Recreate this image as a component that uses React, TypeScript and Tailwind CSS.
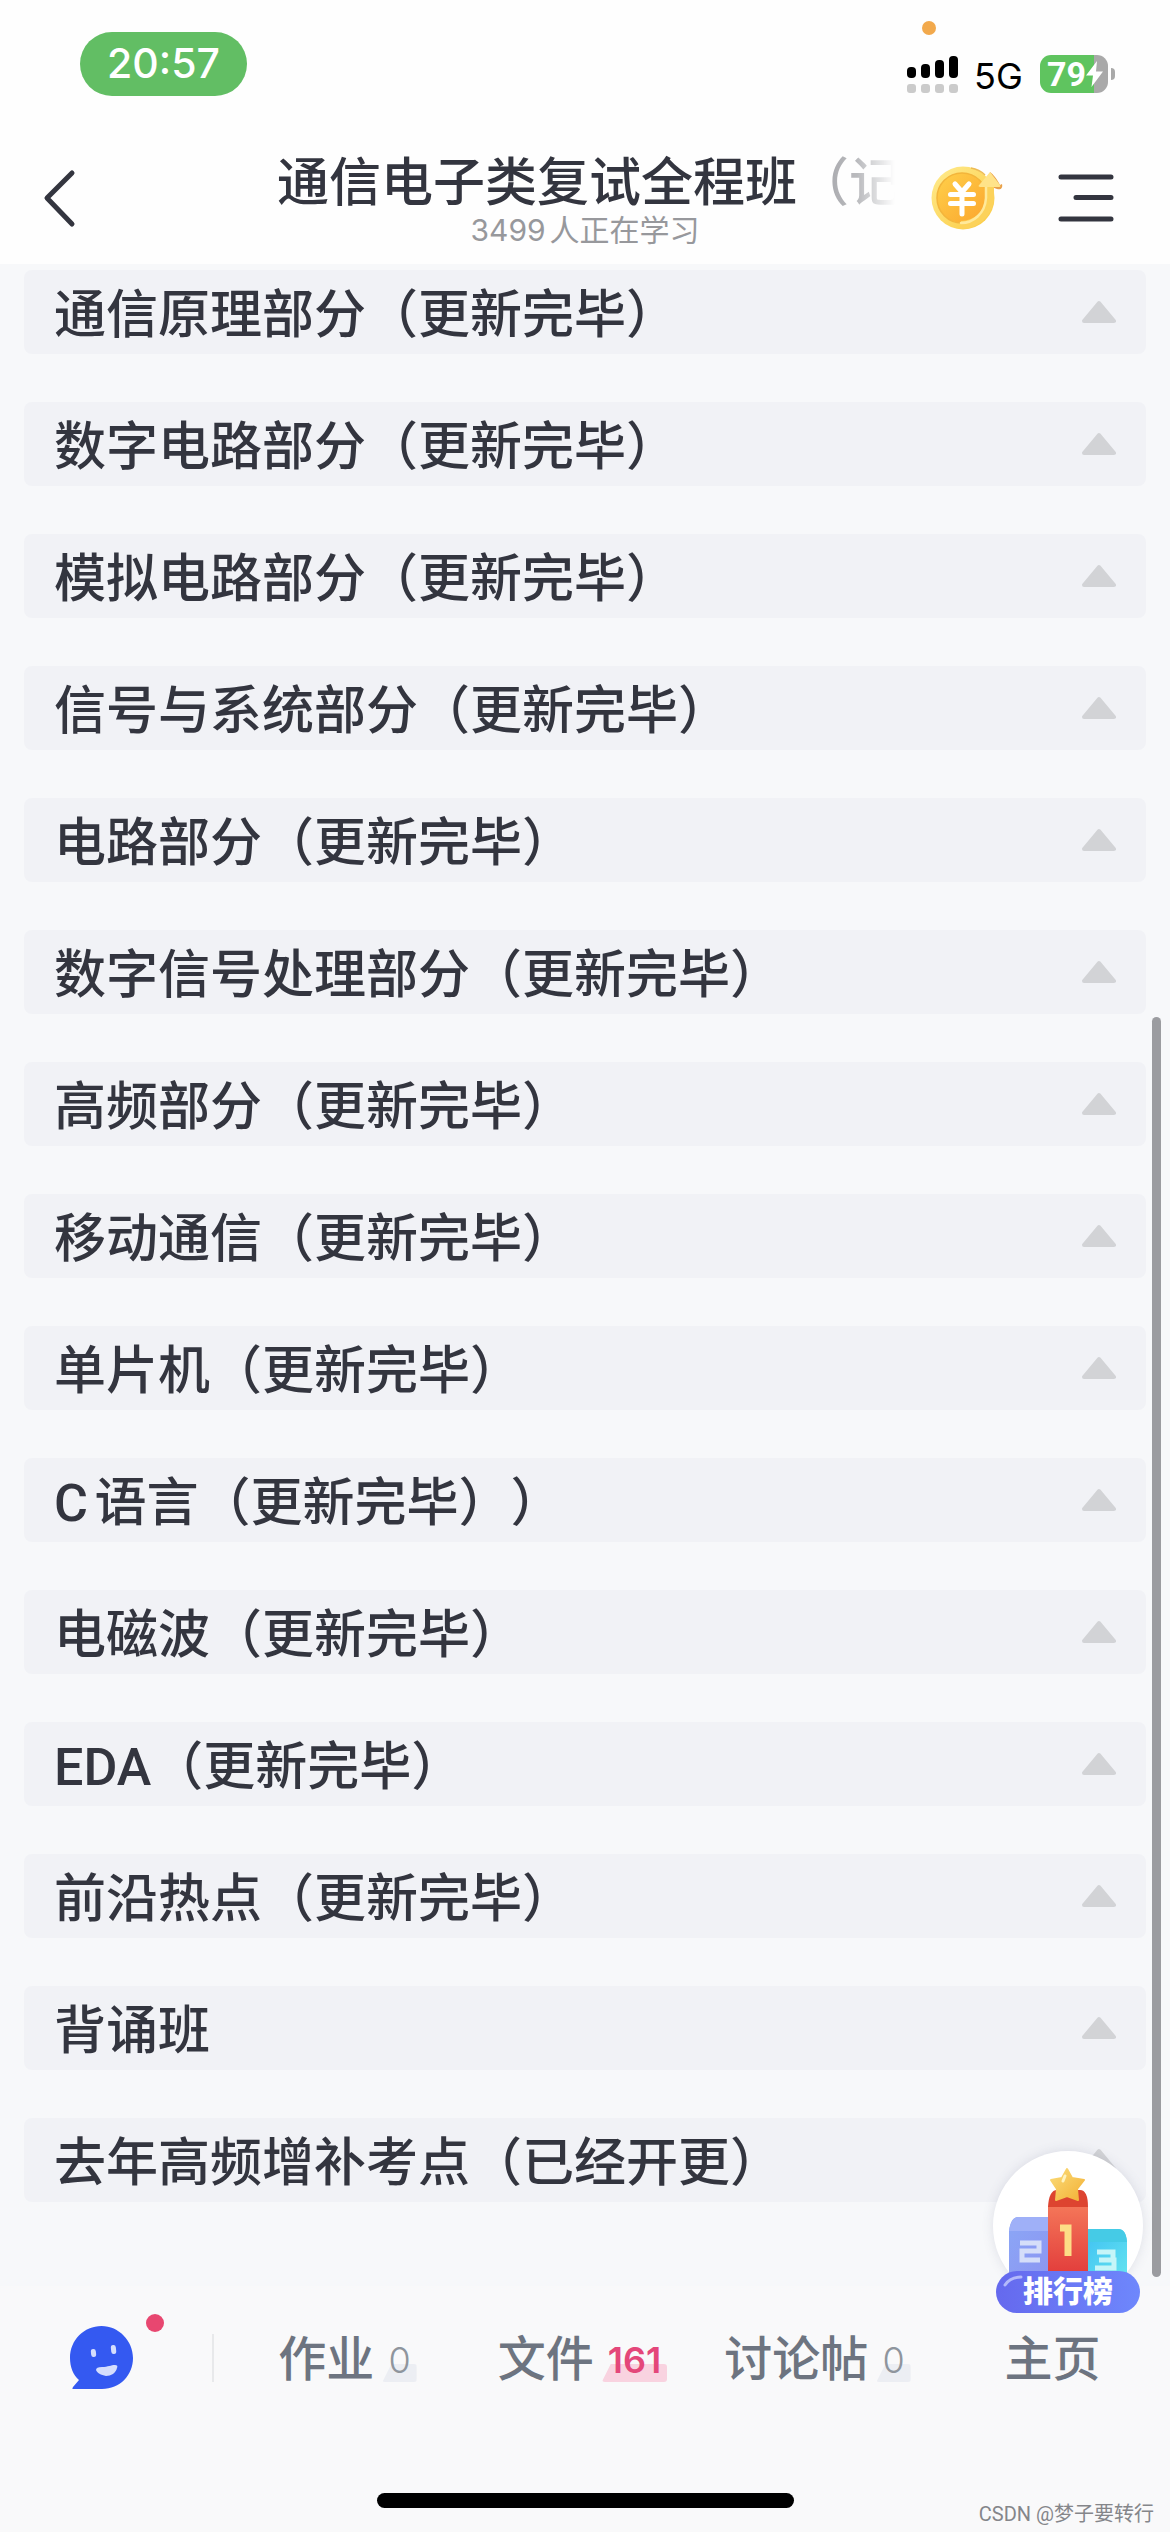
// src/App.tsx
import clsx from 'clsx';

const chapters = [
  '通信原理部分（更新完毕）',
  '数字电路部分（更新完毕）',
  '模拟电路部分（更新完毕）',
  '信号与系统部分（更新完毕）',
  '电路部分（更新完毕）',
  '数字信号处理部分（更新完毕）',
  '高频部分（更新完毕）',
  '移动通信（更新完毕）',
  '单片机（更新完毕）',
  'C语言（更新完毕））',
  '电磁波（更新完毕）',
  'EDA（更新完毕）',
  '前沿热点（更新完毕）',
  '背诵班',
  '去年高频增补考点（已经开更）',
];

const tabs = [
  { label: '作业', count: 0 },
  { label: '文件', count: 161 },
  { label: '讨论帖', count: 0 },
  { label: '主页' },
];

const bars = ['h-[11px]', 'h-[14px]', 'h-[18px]', 'h-[22px]'];

function StatusBar() {
  return (
    <div className="relative flex h-32 items-start justify-between pl-20 pr-[55px] pt-8">
      <div className="flex h-16 w-[167px] items-center justify-center rounded-full bg-[#62be64] font-['Inter'] text-[41px] font-medium text-white">
        20:57
      </div>
      {/* Microphone indicator */}
      <span className="absolute right-[234px] top-[21px] size-3.5 rounded-full bg-[#f2a94c]" />
      <div className="mt-[23px] flex h-[38px] items-center">
        <div className="flex items-end gap-[5px]">
          {bars.map((height) => (
            <div key={height} className="flex flex-col gap-1.5">
              <span className={clsx('w-[9px] rounded-[4px] bg-black', height)} />
              <span className="h-[9px] w-[9px] rounded-[3px] bg-[#cbcbcb]" />
            </div>
          ))}
        </div>
        <span className="ml-4 mt-1 w-[50px] font-['Inter'] text-[36px] leading-none text-black">5G</span>
        <div className="ml-4 flex h-[38px] w-[68px] items-center overflow-hidden rounded-[11px] bg-[linear-gradient(to_right,#5fc45f_79%,#a9a9a9_79%)] pl-[7px] font-['Roboto'] text-[34px] font-bold leading-none text-white">
          79
          <svg viewBox="0 0 17 26" className="h-[26px] w-[17px]" fill="#fff">
            <path d="M11 0 0 14.5h7L5.5 26 17 10.5h-7z" />
          </svg>
        </div>
        <span className="ml-[3px] h-3 w-1 rounded-r-full bg-[#a9a9a9]" />
      </div>
    </div>
  );
}

function CoinIcon() {
  return (
    <svg viewBox="0 0 74 66" className="h-[66px] w-[74px]" fill="none">
      <defs>
        <linearGradient id="coinRim" x1="0" y1="0" x2="1" y2="1">
          <stop offset="0" stopColor="#ffec8f" />
          <stop offset="1" stopColor="#fbc93f" />
        </linearGradient>
        <linearGradient id="coinFace" x1="0" y1="0" x2="1" y2="1">
          <stop offset="0" stopColor="#ffd04a" />
          <stop offset="1" stopColor="#fba52d" />
        </linearGradient>
      </defs>
      <path d="M60 7c3 2 7 7 10 13l2-1c1 4-1 6-5 5l-8-3z" fill="#e9a04a" />
      <circle cx="33" cy="33" r="31.5" fill="url(#coinRim)" />
      <path d="M41 3c6 1 10 3 14 7" stroke="#edbb55" strokeWidth="1.5" />
      <circle cx="32" cy="33" r="25" fill="url(#coinFace)" stroke="#f3b53b" strokeWidth="1.5" />
      <path d="M31 60c15 0 29-12 29-28V18" stroke="#fcd25a" strokeWidth="8" />
      <path d="M31 58c12 0 24-9 25-25V20" stroke="#ffe99a" strokeWidth="2.5" strokeLinecap="round" />
      <path d="m60 7 10 13c1 2 0 2-2 2H51c-3 0-3-1-1-3z" fill="#ffe389" />
      <g stroke="#fff" strokeWidth="5" strokeLinecap="round">
        <path d="m25 19 7 8 7-8" strokeLinejoin="round" />
        <path d="M32 27v22M20.5 29.500h23M20.500 38.500h23" />
      </g>
    </svg>
  );
}

function Header() {
  return (
    <header className="bg-[#fefefe]">
      <StatusBar />
      <div className="grid h-[136px] grid-cols-[277px_minmax(0,1fr)_277px] items-center pt-1">
        <button type="button" aria-label="返回" className="ml-10 w-10">
          <svg viewBox="0 0 40 64" className="h-16 w-10" fill="none" stroke="#33353f" strokeWidth="5" strokeLinecap="round" strokeLinejoin="round">
            <path d="M32 7 7 32l25 26" />
          </svg>
        </button>
        <div className="flex flex-col items-center pt-1">
          <h1 className="self-start whitespace-nowrap text-[52px] font-medium leading-[60px] [mask-image:linear-gradient(to_right,#000_83%,#0007_85%,#0005_93%,transparent_99%)]">
            通信电子类复试全程班（记
          </h1>
          <p className="font-['Inter','Noto_Sans_CJK_SC',sans-serif] text-[30px] leading-8 text-[#97989c]">3499人正在学习</p>
        </div>
        <div className="flex items-center justify-between pl-[37px] pr-[56px]">
          <button type="button" aria-label="金币">
            <CoinIcon />
          </button>
          <button type="button" aria-label="菜单">
            <svg viewBox="0 0 56 48" className="h-12 w-14" fill="none" stroke="#33353f" strokeWidth="5" strokeLinecap="round">
              <path d="M3 3h50M18 23.500h35M3 45h50" />
            </svg>
          </button>
        </div>
      </div>
    </header>
  );
}

function ChapterRow({ title }: { title: string }) {
  return (
    <li>
      <button type="button" className="flex h-[84px] w-full items-center justify-between rounded-lg bg-[#f1f2f6] px-[30px] text-left">
        <span className="whitespace-nowrap pt-2 text-[52px] font-medium leading-[60px]">{title}</span>
        <svg viewBox="0 0 34 24" className="h-6 w-[34px]" fill="#d2d3d6" stroke="#d2d3d6" strokeWidth="4" strokeLinejoin="round">
          <path d="M17 3 32 21H2z" />
        </svg>
      </button>
    </li>
  );
}

function RankingButton() {
  return (
    <button type="button" className="absolute bottom-[-27px] right-[27px] flex h-[162px] w-[150px] flex-col items-center">
      <span className="flex size-[150px] shrink-0 justify-center rounded-full bg-white shadow-[0_0_12px_rgba(80,90,120,0.15)]">
        <svg viewBox="0 0 150 150" className="size-[150px]">
          <defs>
            <linearGradient id="second" x1="0" y1="0" x2="1" y2="1">
              <stop offset="0" stopColor="#8ba7f6" />
              <stop offset="1" stopColor="#8c96f2" />
            </linearGradient>
            <linearGradient id="first" x1="0" y1="0" x2="0" y2="1">
              <stop offset="0" stopColor="#f47558" />
              <stop offset="1" stopColor="#e23e3c" />
            </linearGradient>
            <linearGradient id="third" x1="0" y1="0" x2="1" y2="1">
              <stop offset="0" stopColor="#3fc0f3" />
              <stop offset="1" stopColor="#62e2f0" />
            </linearGradient>
            <linearGradient id="star" x1="0" y1="0" x2="1" y2="1">
              <stop offset="0" stopColor="#fbdc79" />
              <stop offset="1" stopColor="#f3b136" />
            </linearGradient>
          </defs>
          <path d="M16 80q2-14 9-14h32v56H16z" fill="url(#second)" />
          <path d="M16 80q2-14 9-14h32v14z" fill="#9fb0f8" />
          <path d="M94 78h31q8 0 9 13v31H94z" fill="url(#third)" />
          <path d="M94 78h31q8 0 9 13H94z" fill="#45cbe6" />
          <path d="M55 56h40v66H55z" fill="url(#first)" />
          <path d="M55 56q1-17 9-17h23q8 0 8 17z" fill="#dd4430" />
          <path d="m74 18 5 9 12 2-7 9 1 11-11-4-11 4 1-11-6-9 11-2z" fill="url(#star)" stroke="url(#star)" strokeWidth="2" strokeLinejoin="round" />
          <path d="m72 25-2 5" stroke="#fff3bd" strokeWidth="3" strokeLinecap="round" />
          <g fill="none" strokeWidth="5">
            <path d="M27 92h19v8H29v9h18" stroke="#d5def9" />
            <path d="M104 101h16v8h-14 15v8h-19" stroke="#c5f5f8" />
            <path d="M67 77h8v28" stroke="#fddd86" strokeWidth="7" />
          </g>
        </svg>
      </span>
      <span className="relative -mt-[30px] flex h-[42px] w-36 shrink-0 items-center justify-center rounded-full bg-gradient-to-r from-[#6569ee] to-[#6e87fc] text-[30px] font-black leading-none text-white">
        排行榜
        <svg viewBox="0 0 20 12" className="absolute left-[7px] top-1 h-3 w-5" fill="none" stroke="#b3b9fb" strokeWidth="3" strokeLinecap="round">
          <path d="M2 10Q7 2 18 2" />
        </svg>
      </span>
    </button>
  );
}

function CountBadge({ count }: { count: number }) {
  const active = count > 0;

  return (
    <span className="relative ml-2 px-1.5 font-['Inter'] text-[36px] leading-10">
      <span
        className={clsx(
          'absolute inset-x-0 -bottom-0.5 h-[18px] rounded-[3px] [clip-path:polygon(9px_0,100%_0,100%_100%,0_100%)]',
          active ? 'bg-[#f9d3e0]' : 'bg-[#eceef3]',
        )}
      />
      <span className={clsx('relative', active ? 'font-semibold text-[#e4477a]' : 'font-light text-[#8f959d]')}>{count}</span>
    </span>
  );
}

function TabBar() {
  return (
    <footer className="relative bg-[#f9f9fa]">
      <div className="flex h-36 items-center">
        <div className="relative flex w-[230px] shrink-0 items-center pl-[70px]">
          <button type="button" aria-label="学习助手" className="relative">
            <svg viewBox="0 0 64 64" className="size-16">
              <path d="M31.500 0C14 0 0 14 0 32c0 9 3 17 9 22l-6 7c-1 2-1 2 1 2h28c18 0 31-14 31-31S49 0 31.500 0z" fill="#3459f1" />
              <g fill="#d5defd">
                <rect x="21" y="23" width="5" height="8" rx="2.500" transform="rotate(-6 23 27)" />
                <rect x="41" y="19" width="5" height="9" rx="2.500" transform="rotate(-6 43 23)" />
                <path d="M26 44c0-2 2-3 6-3 6 0 9-2 13-2 2 0 3 1 2 3-1 5-6 8-11 8-5-1-9-3-10-6z" />
              </g>
            </svg>
            <span className="absolute -right-[30px] -top-3 size-[18px] rounded-full bg-[#e84770]" />
          </button>
          <span className="absolute right-4 h-12 w-0.5 bg-[#e8e9eb]" />
        </div>
        <nav className="grid flex-1 grid-cols-4 pt-1">
          {tabs.map((tab) => (
            <button key={tab.label} type="button" className="flex items-center justify-center whitespace-nowrap text-[48px] font-medium leading-[56px] text-[#6d7480]">
              {tab.label}
              {tab.count !== undefined && <CountBadge count={tab.count} />}
            </button>
          ))}
        </nav>
      </div>
      <div className="flex h-[102px] items-end justify-center pb-6">
        <span className="h-[15px] w-[417px] rounded-full bg-black" />
      </div>
      <span className="absolute bottom-1.5 right-4 text-[20px] leading-6 text-[#85868a] [text-autospace:no-autospace]">CSDN @梦子要转行</span>
    </footer>
  );
}

function App() {
  return (
    <div className="min-h-screen bg-[#f9f9fa] font-['Roboto','Noto_Sans_CJK_SC',sans-serif] text-[#33353f] [text-autospace:normal] [text-spacing-trim:space-all]">
      <Header />

      <main className="relative z-10 bg-[#f7f8fa] px-6 pb-[84px] pt-1.5">
        <ul className="flex flex-col gap-12">
          {chapters.map((title) => (
            <ChapterRow key={title} title={title} />
          ))}
        </ul>

        {/* Scroll position */}
        <span className="absolute bottom-[9px] right-[9px] h-[1260px] w-[9px] rounded-full bg-[#9b9ca0]" />
        <RankingButton />
      </main>

      <TabBar />
    </div>
  );
}

export default App;
